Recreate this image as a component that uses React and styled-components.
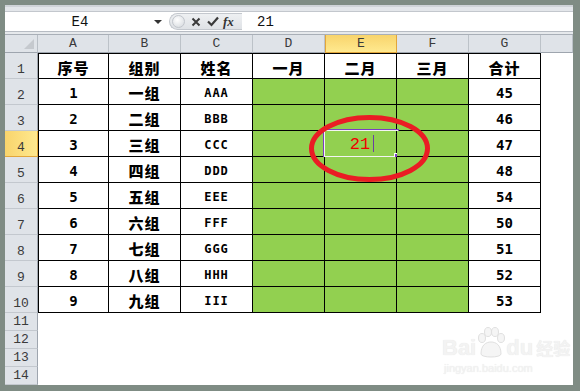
import React from 'react'
import styled, { createGlobalStyle } from 'styled-components';

const GlobalStyle = createGlobalStyle`
  html, body { margin: 0; padding: 0; }
  body {
    background: #7f8c84;
    font-family: "DejaVu Sans Mono", "Noto Sans CJK SC", monospace;
  }
`;

const Frame = styled.div`
  width: 580px;
  height: 391px;
  box-sizing: border-box;
  padding: 5px 7px 6px 5px;
  background: #7f8c84;
`;

const Window = styled.div`
  width: 568px;
  height: 380px;
  display: flex;
  flex-direction: column;
  background: #fff;
  overflow: hidden;
`;

const RibbonEdge = styled.div`
  height: 7px;
  box-sizing: border-box;
  background: #e3e6ea;
  border-top: 2px solid #cfd3d8;
  border-bottom: 1px solid #c3c7cd;
`;

const FormulaBar = styled.div`
  height: 19px;
  display: flex;
  align-items: center;
  background: #fff;
`;

const NameBox = styled.div`
  width: 142px;
  text-align: center;
  font-family: "Liberation Mono", monospace;
  font-size: 14px;
  color: #111;
  padding-left: 4px;
`;

const DropArrow = styled.div`
  width: 0;
  height: 0;
  margin-left: 3px;
  border-left: 4px solid transparent;
  border-right: 4px solid transparent;
  border-top: 4px solid #333;
`;

const FxGroup = styled.div`
  margin-left: 7px;
  width: 73px;
  height: 17px;
  display: flex;
  align-items: center;
  gap: 6px;
  box-sizing: border-box;
  border-radius: 9px 0 0 9px;
  background: linear-gradient(#eef0f2, #dfe2e6);
  border: 1px solid #c4c8ce;
  border-right: none;
  padding-left: 2px;
`;

const Knob = styled.div`
  width: 11px;
  height: 11px;
  border-radius: 50%;
  background: radial-gradient(circle at 40% 35%, #ffffff, #d3d7dc);
  border: 1px solid #c2c6cc;
`;

const FxText = styled.span`
  font-family: "Liberation Serif", serif;
  font-style: italic;
  font-weight: bold;
  font-size: 13px;
  color: #333;
  margin-left: -2px;
`;

const FormulaInput = styled.div`
  flex: 1;
  padding-left: 15px;
  font-family: "Liberation Mono", monospace;
  font-size: 14px;
  color: #111;
`;

const BarGap = styled.div`
  height: 4px;
  box-sizing: border-box;
  background: #e6e9ec;
  border-top: 1px solid #b7bcc3;
  border-bottom: 1px solid #a9afb7;
`;

const Sheet = styled.div`
  position: relative;
  display: grid;
  grid-template-columns: 33px 71px repeat(6, 72px) 32px;
  grid-template-rows: 18px repeat(10, 26px) repeat(4, 18px);
`;

const Corner = styled.div`
  position: relative;
  background: #dfe3e8;
  box-sizing: border-box;
  border-right: 1px solid #b8bec5;
  border-bottom: 1px solid #9ea5ae;
  &::after {
    content: "";
    position: absolute;
    right: 3px;
    bottom: 3px;
    border-left: 10px solid transparent;
    border-bottom: 10px solid #c5c9ce;
  }
`;

const ColHead = styled.div`
  display: flex;
  align-items: center;
  justify-content: center;
  box-sizing: border-box;
  font-family: "Liberation Mono", monospace;
  font-size: 13px;
  color: #3a3a3a;
  background: ${({ $active }) => ($active ? 'linear-gradient(#f8d46c, #ffe98f)' : '#dfe3e8')};
  border-right: 1px solid ${({ $active }) => ($active ? '#e2a63a' : '#bcc2c8')};
  border-left: ${({ $active }) => ($active ? '1px solid #e2a63a' : 'none')};
  border-bottom: 1px solid ${({ $active }) => ($active ? '#e2a63a' : '#9ea5ae')};
`;

const RowHead = styled.div`
  display: flex;
  align-items: flex-end;
  justify-content: center;
  box-sizing: border-box;
  padding-bottom: 1px;
  font-family: "Liberation Mono", monospace;
  font-size: 13px;
  line-height: 14px;
  color: #3a3a3a;
  background: ${({ $active }) => ($active ? 'linear-gradient(90deg, #f8d46c, #ffe98f)' : '#dfe3e8')};
  border-right: 1px solid ${({ $active }) => ($active ? '#e2a63a' : '#9ea5ae')};
  border-bottom: 1px solid ${({ $active }) => ($active ? '#e2a63a' : '#c3c8ce')};
`;

const Cell = styled.div`
  position: relative;
  display: flex;
  align-items: center;
  justify-content: center;
  box-sizing: border-box;
  padding-top: 2px;
  background: ${({ $fill }) => ($fill ? '#92d050' : '#fff')};
  color: #000;
  font-weight: bold;
  font-size: ${({ $small }) => ($small ? '12px' : '14px')};
  letter-spacing: ${({ $small }) => ($small ? '1px' : '0')};
  font-family: "DejaVu Sans Mono", "Noto Sans CJK SC", monospace;
  ${({ $table, $first, $top }) =>
    $table
      ? `border-right: 1px solid #000; border-bottom: 1px solid #000;
         ${$first ? 'border-left: 1px solid #000;' : ''}
         ${$top ? 'border-top: 1px solid #000;' : ''}`
      : ''}
`;

const HanText = styled.span`
  font-family: "Noto Sans CJK SC", sans-serif;
  font-weight: 900;
  font-size: 15px;
  letter-spacing: 1px;
`;

const EditFrame = styled.div`
  position: absolute;
  left: -2px;
  top: -2px;
  right: -3px;
  bottom: -2px;
  border: 1px solid #7a3fc0;
  box-shadow: inset 0 0 0 1px #f4f4f4;
  display: flex;
  align-items: center;
  justify-content: center;
  &::after {
    content: "";
    position: absolute;
    right: -3px;
    bottom: -3px;
    width: 5px;
    height: 5px;
    background: #7a3fc0;
    border: 1px solid #fff;
  }
`;

const EditValue = styled.span`
  font-family: "Liberation Mono", monospace;
  font-weight: normal;
  font-size: 17px;
  color: #f00000;
  margin-left: 2px;
  padding-top: 1px;
`;

const Caret = styled.span`
  display: inline-block;
  width: 1px;
  height: 17px;
  margin-left: 3px;
  background: #6b3fa0;
`;

const Ring = styled.svg`
  position: absolute;
  left: 300px;
  top: 76px;
  pointer-events: none;
`;

const Watermark = styled.div`
  position: absolute;
  left: 437px;
  top: 292px;
  display: flex;
  flex-direction: column;
  align-items: flex-start;
  color: #f3f3f3;
  text-shadow: 0 0 1px #e2e2e2;
  pointer-events: none;
`;

const MarkLine = styled.div`
  display: flex;
  align-items: flex-end;
  font-family: "Liberation Sans", sans-serif;
  font-weight: bold;
  font-size: 22px;
  line-height: 22px;
`;

const MarkHan = styled.span`
  font-family: "Noto Sans CJK SC", sans-serif;
  font-size: 17px;
  margin-left: 3px;
`;

const MarkUrl = styled.div`
  font-family: "Liberation Sans", sans-serif;
  font-size: 11px;
  margin-top: 3px;
  margin-left: 2px;
`;

const headers = ['序号', '组别', '姓名', '一月', '二月', '三月', '合计'];
const rows = [
  [1, '一组', 'AAA', 45],
  [2, '二组', 'BBB', 46],
  [3, '三组', 'CCC', 47],
  [4, '四组', 'DDD', 48],
  [5, '五组', 'EEE', 54],
  [6, '六组', 'FFF', 50],
  [7, '七组', 'GGG', 51],
  [8, '八组', 'HHH', 52],
  [9, '九组', 'III', 53],
];
const cols = ['A', 'B', 'C', 'D', 'E', 'F', 'G', ''];

const App = () => {
  return (
    <Frame>
      <GlobalStyle />
      <Window>
        <RibbonEdge />
        <FormulaBar>
          <NameBox>E4</NameBox>
          <DropArrow />
          <FxGroup>
            <Knob />
            <svg width="10" height="10" viewBox="0 0 10 10">
              <path d="M1.5 1.5 L8.5 8.5 M8.5 1.5 L1.5 8.5" stroke="#3a3a3a" strokeWidth="2" />
            </svg>
            <svg width="12" height="11" viewBox="0 0 12 11">
              <path d="M1 5.5 L4.5 9 L11 1.5" stroke="#3a3a3a" strokeWidth="2.2" fill="none" />
            </svg>
            <FxText>fx</FxText>
          </FxGroup>
          <FormulaInput>21</FormulaInput>
        </FormulaBar>
        <BarGap />
        <Sheet>
          <Corner />
          {cols.map((c) => (
            <ColHead key={c || 'H'} $active={c === 'E'}>{c}</ColHead>
          ))}

          <RowHead>1</RowHead>
          {headers.map((h, i) => (
            <Cell key={h} $table $first={i === 0} $top>
              <HanText>{h}</HanText>
            </Cell>
          ))}
          <Cell />

          {rows.map((r, idx) => (
            <React.Fragment key={r[0]}>
              <RowHead $active={idx === 2}>{idx + 2}</RowHead>
              <Cell $table $first>{r[0]}</Cell>
              <Cell $table><HanText>{r[1]}</HanText></Cell>
              <Cell $table $small>{r[2]}</Cell>
              <Cell $table $fill />
              <Cell $table $fill>
                {idx === 2 && (
                  <EditFrame>
                    <EditValue>21</EditValue>
                    <Caret />
                  </EditFrame>
                )}
              </Cell>
              <Cell $table $fill />
              <Cell $table>{r[3]}</Cell>
              <Cell />
            </React.Fragment>
          ))}

          {[11, 12, 13, 14].map((n) => (
            <React.Fragment key={n}>
              <RowHead>{n}</RowHead>
              {cols.map((c) => (
                <Cell key={c || 'H'} />
              ))}
            </React.Fragment>
          ))}

          <Ring width="130" height="76" viewBox="0 0 130 76">
            <ellipse cx="64.5" cy="37.5" rx="58" ry="31" fill="none" stroke="#ea1c24" strokeWidth="5" />
          </Ring>

          <Watermark>
            <MarkLine>
              Bai
              <svg width="30" height="32" viewBox="0 0 30 32">
                <g fill="#f5f5f5" stroke="#e0e0e0" strokeWidth="1">
                  <ellipse cx="6" cy="11" rx="3.5" ry="4.5" />
                  <ellipse cx="12" cy="5" rx="3.5" ry="4.5" />
                  <ellipse cx="19" cy="5" rx="3.5" ry="4.5" />
                  <ellipse cx="25" cy="11" rx="3.5" ry="4.5" />
                  <path d="M5 27 C5 18 10 15 15 15 C20 15 25 18 25 27 C25 31 5 31 5 27 Z" />
                </g>
              </svg>
              du
              <MarkHan>经验</MarkHan>
            </MarkLine>
            <MarkUrl>jingyan.baidu.com</MarkUrl>
          </Watermark>
        </Sheet>
      </Window>
    </Frame>
  )
}

export default App
